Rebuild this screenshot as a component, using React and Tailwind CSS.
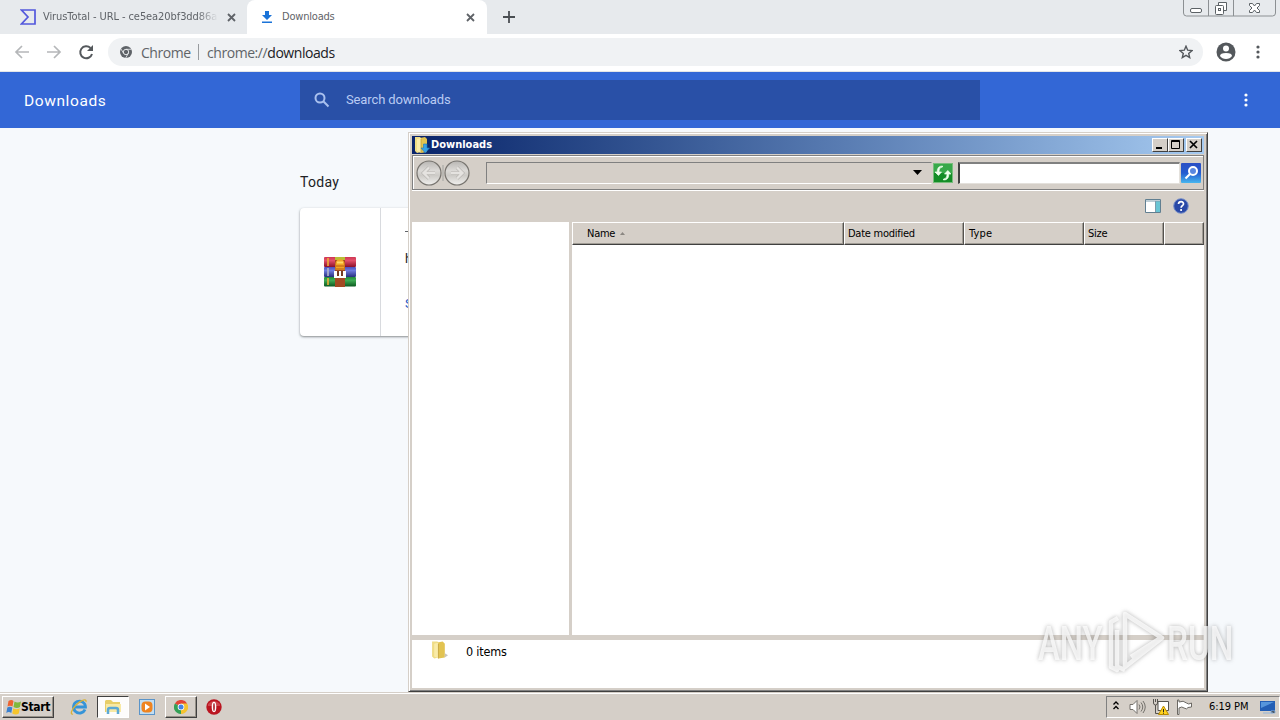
import clsx from 'clsx';

const TAHOMA = "font-['DejaVu_Sans_Condensed','DejaVu_Sans',sans-serif] [font-stretch:condensed]";

function CloseX({ className }) {
  return (
    <svg className={clsx('w-[9px] h-[9px] shrink-0', className)} viewBox="0 0 9 9" fill="none" stroke="#5f6368" strokeWidth="1.8">
      <path d="M1 1l7 7M8 1L1 8" />
    </svg>
  );
}

function Dots({ color, className }) {
  return (
    <svg className={clsx('w-1 h-[14px] shrink-0', className)} viewBox="0 0 4 14" fill={color}>
      <circle cx="2" cy="2" r="1.6" />
      <circle cx="2" cy="7" r="1.6" />
      <circle cx="2" cy="12" r="1.6" />
    </svg>
  );
}

function TabStrip() {
  return (
    <div className="relative flex h-[34px] bg-[#e7eaed] text-[#5f6368]">
      <div className="flex items-center w-[247px] pl-5 pr-[10px]">
        <svg className="w-4 h-4 shrink-0" viewBox="0 0 16 16" fill="none" stroke="#5358dc" strokeWidth="1.7">
          <path d="M1.5 1H15v14H1.5L8 8z" />
        </svg>
        <div className={clsx(TAHOMA, 'ml-[7px] pt-px w-[175px] overflow-hidden whitespace-nowrap text-[11px] tracking-[-0.08px] [mask-image:linear-gradient(to_right,black_88%,transparent)]')}>
          VirusTotal - URL - ce5ea20bf3dd86a
        </div>
        <CloseX className="ml-[9px]" />
      </div>
      <div className="flex items-center w-[240px] pl-[14px] rounded-t-lg bg-white">
        <svg className="w-3 h-3 shrink-0" viewBox="0 0 12 12" fill="#1a73d8">
          <path d="M4 0h4v4h3L6 9 1 4h3zM1 10.5h10V12H1z" />
        </svg>
        <span className={clsx(TAHOMA, 'ml-[9px] pt-px w-[184px] text-[11px] tracking-[-0.2px]')}>Downloads</span>
        <CloseX />
      </div>
      <svg className="w-3 h-3 ml-4 mt-[11px]" viewBox="0 0 12 12" stroke="#4a4e52" strokeWidth="1.8">
        <path d="M6 0v12M0 6h12" />
      </svg>
      <svg className="absolute left-[1183px] top-0 w-[93px] h-[17px]" viewBox="0 0 93 17" fill="none" stroke="#8c9093">
        <path d="M.5 0v13q0 3 3 3h86q3 0 3-3V0M25.5 0v16M50.5 0v16" />
        <g stroke="#5c6266">
          <rect x="7.5" y="8.5" width="11" height="4" rx="1.5" fill="#fff" />
          <path d="M35.500 5.500V2.500h8v8h-3" fill="#fff" />
          <rect x="32.5" y="5.5" width="8" height="9" rx="1" fill="#fff" />
          <rect x="35.5" y="8.5" width="2" height="2" />
          <path d="M66.500 3.500h3l2 2.500 2-2.500h3v2l-2.500 2.500 2.500 2.500v2h-3l-2-2.500-2 2.500h-3v-2L69 8l-2.500-2.500z" fill="#fff" />
        </g>
      </svg>
    </div>
  );
}

function AddressBar() {
  return (
    <div className="flex items-center h-[38px] pb-px border-b border-[#e3e5e8] bg-white">
      <svg className="w-[94px] h-5 shrink-0" viewBox="0 0 94 20" fill="none" strokeWidth="1.7">
        <path d="M29 10H16M22 4l-6 6 6 6" stroke="#b5b7b9" />
        <path d="M47 10h13M54 4l6 6-6 6" stroke="#b5b7b9" />
        <path d="M90.500 6A6 6 0 1 0 92 12" stroke="#54585c" strokeWidth="2" />
        <path d="M93 3v6h-6z" fill="#54585c" />
      </svg>
      <div className="flex items-center h-7 w-[1095px] ml-[14px] pl-3 pr-[10px] rounded-full bg-[#f0f2f4] font-['Open_Sans',sans-serif] text-[14px] text-[#606468]">
        <svg className="w-3 h-3 shrink-0" viewBox="0 0 12 12">
          <circle cx="6" cy="6" r="6" fill="#5f6368" />
          <circle cx="6" cy="6" r="2.7" fill="none" stroke="#eef0f2" strokeWidth=".9" />
          <path d="M6 3.300h5.500M3.600 7.300L1 3M8.300 7.300L5.700 12" stroke="#eef0f2" strokeWidth=".8" />
        </svg>
        <span className="ml-[9px] w-[50px] whitespace-nowrap tracking-[-0.45px]">Chrome</span>
        <span className="w-px h-4 ml-[7px] mr-2 bg-[#989b9e]" />
        <span className="grow whitespace-nowrap tracking-[-0.44px]">
          chrome://<span className="text-[#202124]">downloads</span>
        </span>
        <svg className="w-[14px] h-[14px]" viewBox="0 0 14 14" fill="none" stroke="#54585c" strokeWidth="1.4">
          <path d="M7 1.200l1.700 4 4.300.4-3.300 2.800 1 4.200L7 10.400l-3.700 2.200 1-4.200L1 5.600l4.300-.4z" />
        </svg>
      </div>
      <svg className="w-5 h-5 ml-[13px]" viewBox="0 0 20 20">
        <circle cx="10" cy="10" r="9.5" fill="#54585c" />
        <circle cx="10" cy="6.5" r="3" fill="#fff" />
        <path d="M4 14q0-3 6-3t6 3q-2 3-6 3t-6-3z" fill="#fff" />
      </svg>
      <Dots color="#54585c" className="ml-5" />
    </div>
  );
}

function DownloadsPage() {
  return (
    <>
      <header className="flex items-center h-14 bg-[#3367d6] font-[Roboto,sans-serif]">
        <h1 className="w-[300px] pl-6 pt-[3px] text-[15.5px] tracking-[0.6px] text-white">Downloads</h1>
        <div className="flex items-center w-[680px] h-10 pl-[14px] bg-[#2950a7] text-[#b9cbf3]">
          <svg className="w-4 h-4" viewBox="0 0 16 16" fill="none" stroke="#a9c0ee" strokeWidth="2">
            <circle cx="6" cy="6" r="4.5" />
            <path d="M9.300 9.300l5.200 5.200" />
          </svg>
          <span className="ml-4 text-[13px] tracking-[-0.12px]">Search downloads</span>
        </div>
        <Dots color="#fff" className="ml-[264px]" />
      </header>
      <main className="h-[564px] pt-[45px] pl-[300px] bg-[#f6f9fc] font-[Roboto,sans-serif] text-[#202124]">
        <h2 className="h-[35px] text-[14px] leading-[19px] tracking-[0.3px]">Today</h2>
        <div className="flex w-[680px] h-32 rounded bg-white shadow-[0_1px_2px_rgba(60,64,67,.4),0_1px_3px_rgba(60,64,67,.25)]">
          <div className="flex items-center justify-center w-[81px] border-r border-[#d8dade]">
            <RarIcon />
          </div>
          <div className="pl-6 text-[13px] leading-4">
            <div className="mt-[23px] w-2 h-px bg-[#606468]" />
            <div className="mt-[19px]">h</div>
            <div className="mt-[29px] text-[#1a56c4]">S</div>
          </div>
        </div>
      </main>
    </>
  );
}

function RarIcon() {
  return (
    <svg className="w-8 h-[30px]" viewBox="0 0 32 30">
      <defs>
        <linearGradient id="red" x2="0" y2="1"><stop stopColor="#cf3653" /><stop offset=".35" stopColor="#e2506a" /><stop offset="1" stopColor="#8c1029" /></linearGradient>
        <linearGradient id="blue" x2="0" y2="1"><stop stopColor="#4b51bd" /><stop offset=".35" stopColor="#6e7bdf" /><stop offset="1" stopColor="#28307f" /></linearGradient>
        <linearGradient id="green" x2="0" y2="1"><stop stopColor="#228b37" /><stop offset=".35" stopColor="#3fac54" /><stop offset="1" stopColor="#0c5920" /></linearGradient>
      </defs>
      <rect width="32" height="10" rx="1" fill="url(#red)" />
      <rect y="10" width="32" height="10" rx="1" fill="url(#blue)" />
      <rect y="20" width="32" height="9.5" rx="1" fill="url(#green)" />
      <path d="M4 1v8M4 21v7" stroke="#efae38" strokeWidth="1.6" />
      <path d="M4 11v8" stroke="#b3b6ca" strokeWidth="1.6" />
      <rect x="11" width="10" height="30" fill="#a34a23" />
      <path d="M11 0h10v3H11z" fill="#b9bd35" />
      <path d="M11.500 9q-1-6 4.500-7 5.500 1 4.500 7v4h-9z" fill="#f1a426" />
      <path d="M12 9h8M12 12h8" stroke="#b65d14" />
      <path d="M13 5.500h6" stroke="#ffdb67" strokeWidth="2" />
      <path d="M10 14h3v5h2v-5h2v5h2v-5h3v7H10z" fill="#fff" />
      <path d="M13 14h2v5h-2zM17 14h2v5h-2z" fill="#753c23" />
    </svg>
  );
}

function CaptionButton({ children, className }) {
  return (
    <div className={clsx('w-4 h-[14px] bg-[#d5cfc8] border border-t-white border-l-white border-r-[#404040] border-b-[#404040]', className)}>
      <svg className="w-[14px] h-3" viewBox="0 0 14 12" fill="none" stroke="#000">{children}</svg>
    </div>
  );
}

function RoundArrow({ flip }) {
  return (
    <svg className={clsx('w-[26px] h-[26px] shrink-0', flip && '-scale-x-100')} viewBox="0 0 26 26">
      <defs>
        <linearGradient id="ball" x2="0" y2="1"><stop stopColor="#b8b6b3" /><stop offset=".4" stopColor="#dcdad7" /><stop offset=".6" stopColor="#cdcbc7" /><stop offset="1" stopColor="#f1f0ee" /></linearGradient>
      </defs>
      <circle cx="13" cy="13" r="12" fill="url(#ball)" stroke="#77746f" strokeWidth="1.2" />
      <path d="M19 13H8M13 7.500L7.500 13l5.500 5.500" fill="none" stroke="#b7b5b1" strokeWidth="3.6" />
      <path d="M19 13H8M13 7.500L7.500 13l5.500 5.500" fill="none" stroke="#e5e3e0" strokeWidth="2.4" />
    </svg>
  );
}

function HeaderCell({ children, className }) {
  return (
    <div className={clsx('flex items-center h-[23px] pt-[2px] border border-t-white border-l-white border-r-[#55524e] border-b-[#404040] shadow-[inset_-1px_-1px_#a09c95]', className)}>
      {children}
    </div>
  );
}

function FolderIcon({ className, arrow }) {
  return (
    <svg className={clsx('w-4 h-[18px] shrink-0', className)} viewBox="0 0 16 18">
      <path d="M1 1h5l1 1v14l-4 1-2-2z" fill="#efdc85" />
      <path d="M6 2l5-1 2 2v13l-6 1z" fill="#e2c351" />
      <path d="M3 3l4-1v15l-4-2z" fill="#f9eba8" />
      <path d="M7 3v14" stroke="#bd9a32" strokeWidth=".7" />
      {arrow ? (
        <path d="M9.500 8h3.500v4h2.500L11.300 17 7 12h2.500z" fill="#37a1e5" stroke="#1d75b9" strokeWidth=".6" />
      ) : (
        <path d="M13 12l3 2-3 2z" fill="#c7c3bb" />
      )}
    </svg>
  );
}

function ExplorerWindow() {
  return (
    <div className={clsx(TAHOMA, 'absolute left-[408px] top-[132px] flex flex-col w-[800px] h-[560px] bg-[#d5cfc8] border border-t-[#d5cfc8] border-l-[#d5cfc8] border-r-[#404040] border-b-[#404040] shadow-[inset_1px_1px_#fff,inset_-1px_-1px_#808080] p-[3px] text-[11px] text-black')}>
      <div className="flex items-center h-[18px] pr-[2px] shrink-0 bg-linear-to-r from-[#0a246a] to-[#a6caf0]">
        <FolderIcon className="ml-[2px]" arrow />
        <span className="grow ml-px pt-px font-bold tracking-[0px] text-white">Downloads</span>
        <CaptionButton className="-ml-px"><path d="M3 9h6" strokeWidth="2" /></CaptionButton>
        <CaptionButton><path d="M2.500 1.500h8v8h-8zM2 2.500h9" /></CaptionButton>
        <CaptionButton className="ml-[2px]"><path d="M3 2l7 7M10 2L3 9" strokeWidth="1.7" /></CaptionButton>
      </div>
      <div className="flex items-center h-[35px] mt-px shrink-0 border border-[#808080] shadow-[inset_1px_1px_#fff,0_1px_#fff] pl-[3px]">
        <RoundArrow />
        <div className="w-[2px] h-4 bg-[#bbb9b4]" />
        <RoundArrow flip />
        <div className="flex items-center justify-end w-[446px] h-[22px] ml-4 border border-t-[#808080] border-l-[#808080] border-r-transparent border-b-white pr-[9px]">
          <svg className="w-[9px] h-[5px]" viewBox="0 0 9 5"><path d="M0 0h9L4.500 5z" /></svg>
        </div>
        <svg className="w-5 h-5 shrink-0 ml-px" viewBox="0 0 20 20">
          <rect x=".5" y=".5" width="19" height="19" fill="#38a94a" stroke="#77bd7b" />
          <path d="M1 10h18v9H1z" fill="#148d27" />
          <path d="M9.500 4Q6 4 6 8v1h2.500L5.500 12.500 2 9h2.200Q4 3 9.500 3z" fill="#efffed" stroke="#efffed" strokeWidth=".7" />
          <path d="M10.500 16q3.500 0 3.500-4v-1h-2.500l3.300-3.500L18 11h-2.200q.2 6-5.300 6z" fill="#efffed" stroke="#efffed" strokeWidth=".7" />
        </svg>
        <div className="w-[222px] h-[22px] ml-[5px] shrink-0 bg-white border-2 border-t-[#808080] border-l-[#404040] border-r-[#e4e1dc] border-b-[#e4e1dc] border-r border-b" />
        <svg className="w-5 h-5 ml-px shrink-0" viewBox="0 0 20 20">
          <defs><linearGradient id="find" x2="0" y2="1"><stop stopColor="#2b4fc4" /><stop offset=".5" stopColor="#245cd0" /><stop offset="1" stopColor="#47b6ee" /></linearGradient></defs>
          <rect width="20" height="20" rx="1" fill="url(#find)" />
          <circle cx="12" cy="8" r="4" fill="#5a87df" stroke="#fff" strokeWidth="2" />
          <path d="M9 11l-4.500 4.500" stroke="#fff" strokeWidth="2.2" />
        </svg>
      </div>
      <div className="flex items-center justify-end h-8 shrink-0 pr-[15px]">
        <svg className="w-4 h-[14px]" viewBox="0 0 16 14">
          <path d="M.5.5h15v13H.5z" fill="#fff" stroke="#617f91" />
          <path d="M11 2h4v11h-4z" fill="#69c5d4" />
          <path d="M1 2h14M10.500 2v11" stroke="#7c9cac" />
        </svg>
        <svg className="w-4 h-4 ml-3" viewBox="0 0 16 16">
          <circle cx="8" cy="8" r="7.3" fill="#2a49a7" stroke="#7a91c9" />
          <path d="M5.500 6q.2-2.300 2.600-2.300T10.500 6c0 1.500-2.400 1.800-2.400 3.700M8.100 11v2" fill="none" stroke="#fff" strokeWidth="1.7" />
        </svg>
      </div>
      <div className="flex h-[413px] shrink-0 bg-white">
        <div className="w-[160px] border-r-[3px] border-[#d5cfc8]" />
        <div className="grow">
          <div className="flex bg-[#d5cfc8] tracking-[-0.25px]">
            <HeaderCell className="w-[272px] pl-[14px]">
              Name
              <svg className="w-[5px] h-[3px] ml-[5px] -mt-[3px]" viewBox="0 0 5 3" fill="#8b8782"><path d="M0 3h5L2.500 0z" /></svg>
            </HeaderCell>
            <HeaderCell className="w-[120px] pl-[3px]">Date modified</HeaderCell>
            <HeaderCell className="w-[120px] pl-1 tracking-[0.2px]">Type</HeaderCell>
            <HeaderCell className="w-20 pl-[3px]">Size</HeaderCell>
            <HeaderCell className="w-10" />
          </div>
        </div>
      </div>
      <div className="h-[5px] shrink-0 bg-[#d5cfc8]" />
      <div className="flex h-12 shrink-0 pl-5 bg-white">
        <FolderIcon className="w-[17px] h-[20px] -ml-px" />
        <span className="ml-[18px] mt-[4px] text-[12.5px] leading-4 tracking-[-0.2px]">0 items</span>
      </div>
    </div>
  );
}

function TaskButton({ children, className }) {
  return (
    <div className={clsx('flex items-center justify-center h-[22px] border', className)}>{children}</div>
  );
}

function Taskbar() {
  const raised = 'border-t-white border-l-white border-r-[#404040] border-b-[#404040] shadow-[inset_-1px_-1px_#969188]';
  return (
    <div className={clsx(TAHOMA, 'flex items-center h-7 border-t border-[#d5cfc8] bg-[#d5cfc8] shadow-[inset_0_1px_#fff] text-[11px] text-black')}>
      <TaskButton className={clsx('w-[52px] ml-[2px]', raised)}>
        <svg className="w-4 h-4 shrink-0" viewBox="0 0 16 16">
          <path d="M2.500 2q3-2 5 0l-1 5.500q-2.500-1.500-5 0z" fill="#ed6430" />
          <path d="M8.500 2.500q3 2 6.500 0L14 8q-3 2-6.500 0z" fill="#80b83c" />
          <path d="M1.300 8.500q2.500-1.500 5 0l-1 5.500q-2.500-2-5 0z" fill="#3a80cf" />
          <path d="M7.300 9.200q3 2 6.500 0l-1 5.300q-3 2-6.500 0z" fill="#f6c52c" />
        </svg>
        <span className="-ml-px text-[12px] font-bold tracking-[-0.35px]">Start</span>
      </TaskButton>
      <svg className="w-[18px] h-[18px] ml-4" viewBox="0 0 18 18" fill="none">
        <path d="M15 11.500A6 6 0 1 1 15.500 9H5" stroke="#3594d8" strokeWidth="2.8" />
        <path d="M3 16c-3 1-2-4 3-9s11-7 10-3" stroke="#d7b239" strokeWidth="1.3" />
      </svg>
      <TaskButton className="w-8 ml-[9px] bg-[#fdfcfb] border-t-[#404040] border-l-[#404040] border-r-white border-b-white">
        <svg className="w-[18px] h-4" viewBox="0 0 18 16">
          <path d="M1 2l1-1h5l2 2h7v10H1z" fill="#e8ce68" />
          <path d="M2 5h15v8H2z" fill="#f8e9a4" />
          <path d="M4 15v-4q0-2 2-2h6q2 0 2 2v4" fill="none" stroke="#5ca9d5" strokeWidth="2.5" />
        </svg>
      </TaskButton>
      <svg className="w-4 h-4 ml-[10px]" viewBox="0 0 16 16">
        <rect x=".5" y=".5" width="15" height="15" fill="#c2def2" stroke="#5a94c9" />
        <rect x="2.5" y="2.5" width="11" height="11" rx="4" fill="#ef8420" />
        <path d="M6 4.500l5 3.500-5 3.500z" fill="#fff" />
      </svg>
      <TaskButton className={clsx('w-8 ml-[10px]', raised)}>
        <svg className="w-[14px] h-[14px]" viewBox="0 0 14 14">
          <path d="M7 7L.9 3.500A7 7 0 0 1 13.100 3.500z" fill="#e24436" />
          <path d="M7 7L.9 3.500A7 7 0 0 0 7 14l3-5z" fill="#34a056" />
          <path d="M7 7l0 7A7 7 0 0 0 13.100 3.500H7z" fill="#f5c32f" />
          <circle cx="7" cy="7" r="3.3" fill="#fff" />
          <circle cx="7" cy="7" r="2.5" fill="#4483e4" />
        </svg>
      </TaskButton>
      <svg className="w-4 h-4 ml-[9px]" viewBox="0 0 16 16">
        <circle cx="8" cy="8" r="7.7" fill="#ba1520" />
        <path d="M2 5q6-6 12 0v2H2z" fill="#d75a60" opacity=".7" />
        <ellipse cx="8" cy="8" rx="2.3" ry="5.2" fill="#fff" />
        <ellipse cx="8" cy="8" rx=".8" ry="4" fill="#a4121c" />
      </svg>
      <div className="flex items-center h-[22px] ml-auto w-[174px] pl-[6px] border border-t-[#808080] border-l-[#808080] border-r-white border-b-white">
        <svg className="w-[6px] h-[9px] shrink-0 -mt-[2px]" viewBox="0 0 6 9" fill="none" stroke="#000" strokeWidth="1.3"><path d="M.5 3.500L3 1l2.500 2.500M.5 8L3 5.500 5.500 8" /></svg>
        <svg className="w-[17px] h-4 ml-[10px] shrink-0" viewBox="0 0 17 16" fill="#fff" stroke="#74716c">
          <path d="M1 5.500h3l4-4v13l-4-4H1z" />
          <path d="M10 5.500q2 2.500 0 5M12 3.500q3.500 4.500 0 9M14 2q4.500 6 0 12" fill="none" />
        </svg>
        <svg className="w-4 h-4 ml-[7px] shrink-0" viewBox="0 0 16 16" fill="#fff" stroke="#55534f">
          <path d="M5 2.500h10.500v9H5z" />
          <path d="M.5 0v4q0 2 2 2t2-2V0M2.500 6v8.500H6M2.500 0v3" fill="none" />
          <path d="M10.500 7L15.500 15.500H5.500z" fill="#ffd21e" stroke="#b98a00" />
          <path d="M10.500 10v3M10.500 13.700v1" stroke="#222" />
        </svg>
        <svg className="w-[17px] h-4 ml-[7px] shrink-0" viewBox="0 0 17 16" fill="#fff" stroke="#6b6863">
          <path d="M1.500 1v14.500h1.500V9q3-2 5 0 3 2 4-.5l3.500-.5V4q-3 2-5 0-3-3-7.500-1V1z" />
        </svg>
        <span className="ml-4 pt-px w-[42px] whitespace-nowrap tracking-[-0.05px]">6:19 PM</span>
        <svg className="w-4 h-[14px] ml-[9px] shrink-0" viewBox="0 0 16 14">
          <path d="M0 1h15v10H0z" fill="#235eb5" />
          <path d="M1 2h13L1 8z" fill="#5695dc" />
          <path d="M3 13h10M11 11h4v2h-4z" stroke="#93b4d9" />
        </svg>
      </div>
    </div>
  );
}

function Watermark() {
  return (
    <div className="absolute left-[1038px] top-[609px] flex items-center w-[200px] h-[64px] font-[Roboto,sans-serif] font-medium text-[49px] leading-none text-white/75 drop-shadow-[0_0_2px_rgba(90,90,90,.6)]">
      <span className="w-[68px] pt-1"><span className="inline-block origin-left scale-x-[.67]">ANY</span></span>
      <svg className="w-[60px] h-[64px] shrink-0" viewBox="0 0 60 64" fill="none" stroke="#fff" strokeOpacity=".75" strokeWidth="4.5" strokeLinejoin="round">
        <path d="M19 5L56 29 19 58zM12 9L5 13v45l6 3v-40M25 48l28-18M19 61L12 58" />
      </svg>
      <span className="ml-px pt-1 w-16"><span className="inline-block origin-left scale-x-[.68]">RUN</span></span>
    </div>
  );
}

export default function App() {
  return (
    <div className="relative w-[1280px] h-[720px] overflow-hidden bg-white">
      <TabStrip />
      <AddressBar />
      <DownloadsPage />
      <ExplorerWindow />
      <Taskbar />
      <Watermark />
    </div>
  );
}
